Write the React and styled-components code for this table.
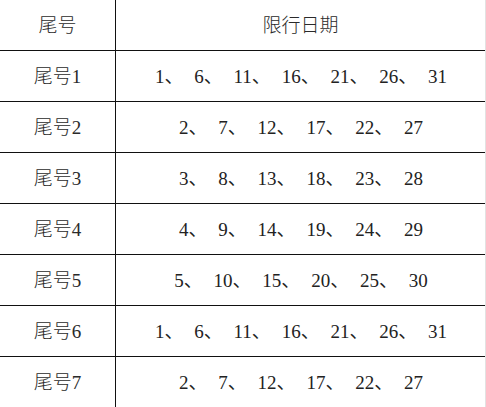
import React from "react";
import styled, { createGlobalStyle } from "styled-components";

const Global = createGlobalStyle`
  html, body { margin: 0; padding: 0; background: #fff; }
  body { width: 486px; height: 407px; overflow: hidden; }
`;

const Table = styled.div`
  width: 486px;
  box-sizing: border-box;
  border-right: 1px solid #e2e2e2;
  display: grid;
  grid-template-columns: 116px 1fr;
  font-family: "Liberation Serif", "Noto Sans CJK SC", serif;
  font-size: 19px;
  line-height: 1;
  color: #222;
`;

const Cell = styled.div`
  height: 50px;
  border-bottom: 1px solid ${(p) => (p.$last ? "transparent" : "#111")};
  border-right: ${(p) => (p.$first ? "1px solid #111" : "none")};
  display: flex;
  align-items: center;
  justify-content: center;
  box-sizing: content-box;
`;

const Label = styled.span`
  font-weight: 300;
  color: #2a2a2a;
`;

const Dates = styled.div`
  display: flex;
  align-items: baseline;
  gap: 10.8px;
  padding-left: 1px;
`;

const Item = styled.span`
  white-space: nowrap;
  line-height: 1;
`;

const rows = [
  [1, 6, 11, 16, 21, 26, 31],
  [2, 7, 12, 17, 22, 27],
  [3, 8, 13, 18, 23, 28],
  [4, 9, 14, 19, 24, 29],
  [5, 10, 15, 20, 25, 30],
  [1, 6, 11, 16, 21, 26, 31],
  [2, 7, 12, 17, 22, 27],
];

export default function App() {
  return (
    <>
      <Global />
      <Table>
        <Cell $first><Label>尾号</Label></Cell>
        <Cell><Label>限行日期</Label></Cell>
        {rows.map((r, i) => (
          <React.Fragment key={i}>
            <Cell $first $last={i === rows.length - 1}>
              <Label>尾号{i + 1}</Label>
            </Cell>
            <Cell $last={i === rows.length - 1}>
              <Dates>
                {r.map((n, j) => (
                  <Item key={j}>
                    {n}
                    {j < r.length - 1 ? "、" : ""}
                  </Item>
                ))}
              </Dates>
            </Cell>
          </React.Fragment>
        ))}
      </Table>
    </>
  );
}
